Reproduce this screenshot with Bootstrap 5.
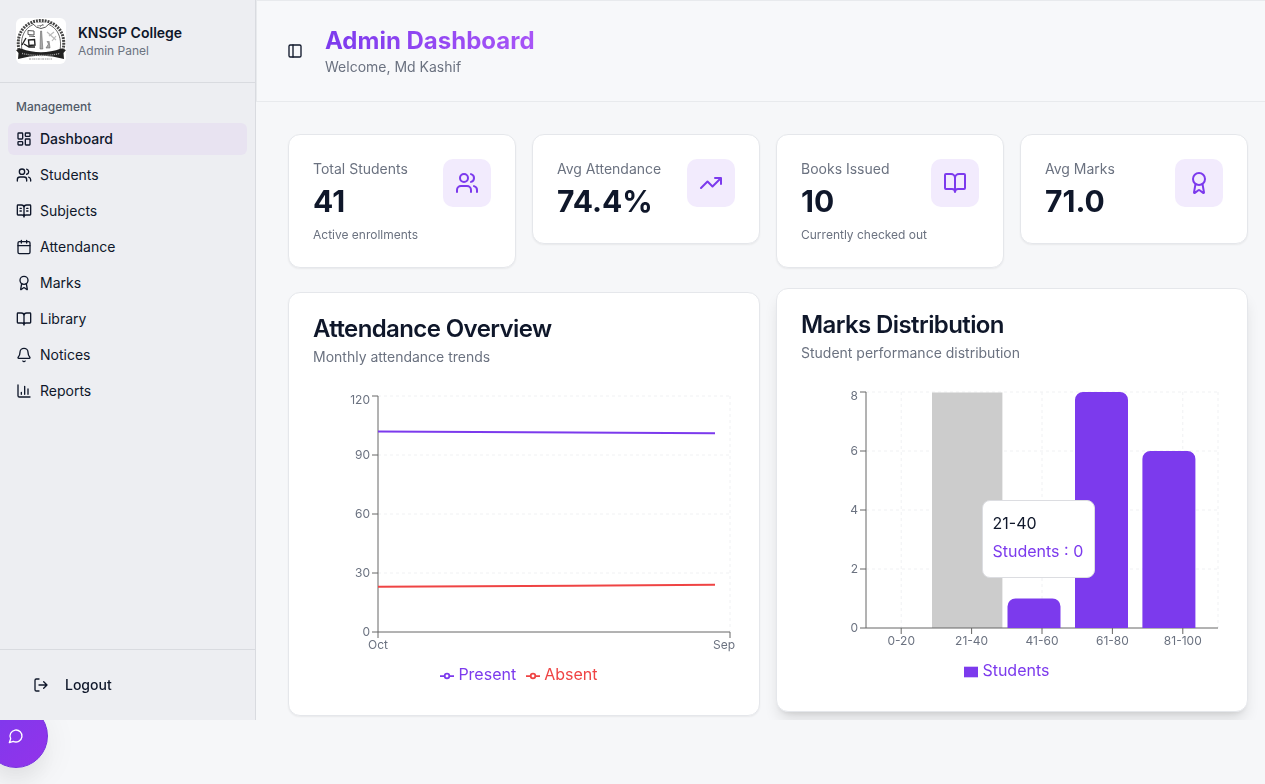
<!DOCTYPE html>
<html lang="en">
<head>
<meta charset="utf-8">
<meta name="viewport" content="width=device-width, initial-scale=1">
<title>Admin Dashboard</title>
<link href="https://cdn.jsdelivr.net/npm/bootstrap@5.3.0/dist/css/bootstrap.min.css" rel="stylesheet">
<style>
:root{--ink:#0f172a;--muted-ink:#6b7280;--brand:#7c3aed;--line:#e5e7eb}
html,body{height:100%}
body{font-family:Inter,sans-serif;font-size:14px;line-height:20px;color:var(--ink);background:#f6f7f9;overflow:hidden}
.ico{width:16px;height:16px;flex:none;fill:none;stroke:currentColor;stroke-width:2;stroke-linecap:round;stroke-linejoin:round}
.ico-lg{width:24px;height:24px}
.app-shell{height:720px;overflow:hidden;position:relative;z-index:2}
.side-panel{width:256px;flex:none;background:#edeef2;border-right:1px solid #d9dbe0}
.side-head{height:83px;padding:17px 16px 0;border-bottom:1px solid #d9dbe0;gap:12px}
.side-name{font-weight:600;line-height:17.5px;margin-top:7px}
.side-role{font-size:12px;line-height:16px;margin-top:1px}
.crest{width:50px;height:46px;margin-top:1px}
.group-title{font-size:12px;line-height:16px;font-weight:500;color:#515a68;padding:16px 8px 8px}
.side-nav{gap:4px}
.side-nav .nav-link{height:32px;padding:0 8px;gap:8px;border-radius:6px;color:var(--ink);font-weight:400}
.side-nav .nav-link.active{background:#e8e3f1;font-weight:500}
.side-foot{height:71px;border-top:1px solid #d9dbe0;padding:0 33px;font-weight:500;gap:16px}
.soft{color:var(--muted-ink)}
.main-head{height:102px;padding:0 30px;gap:22px;background:#f7f8fa;border:1px solid #e8eaed;border-right:0;will-change:transform}
.head-title{font-size:24px;line-height:32px;font-weight:700;margin:0;background:linear-gradient(90deg,#7c3aed,#a855f7);-webkit-background-clip:text;background-clip:text;color:transparent}
.main-body{padding:32px 17px 0 32px}
.tile{background:#fff;border:1px solid var(--line);border-radius:12px;padding:24px;box-shadow:0 1px 2px rgba(0,0,0,.06)}
.stat-row,.chart-row{display:grid;gap:16px}
.stat-row{grid-template-columns:repeat(4,1fr)}
.chart-row{grid-template-columns:repeat(2,1fr);margin-top:24px}
.stat-value{font-size:30px;line-height:36px;font-weight:700;margin-top:4px}
.stat-note{font-size:12px;line-height:16px;margin-top:8px}
.stat-tile{min-height:110px}
.stat-badge{width:48px;height:48px;border-radius:10px;background:#f2ebfd;color:var(--brand)}
.chart-title{font-size:24px;line-height:24px;font-weight:600;letter-spacing:-.6px;margin:0}
.chart-sub{margin-top:6px;margin-bottom:24px}
.chart-tile.lift{transform:translateY(-4px);box-shadow:0 10px 15px -3px rgba(0,0,0,.12),0 4px 6px -4px rgba(0,0,0,.12)}
.plot{position:relative;height:300px}
.plot svg.canvas{display:block;width:422px;height:300px}
.canvas text{font-size:12px;fill:var(--muted-ink)}
.canvas text.key{font-size:16px}
.axis{stroke:#666;stroke-width:1;fill:none}
.gridline{stroke:#f0f1f3;stroke-dasharray:3 3;fill:none;stroke-width:1}
.tip{position:absolute;left:181px;top:113px;width:112.500px;height:78px;background:#fff;border:1px solid #dcdde1;border-radius:8px;padding:10px 9.500px;font-size:16px;line-height:24px;white-space:nowrap;will-change:transform}
.tip p{margin:0}
.tip p+p{padding-top:4px;color:var(--brand)}
.fab{position:fixed;left:-16px;top:704px;width:64px;height:64px;border:1px solid #7432dc;border-radius:50%;background:linear-gradient(135deg,#7c3aed,#9333ea);color:#fff;box-shadow:0 20px 25px -5px rgba(0,0,0,.05),0 8px 34px rgba(0,0,0,.07);z-index:1}
</style>
</head>
<body>
<svg width="0" height="0" class="position-absolute" aria-hidden="true">
<symbol id="users" viewBox="0 0 24 24"><path d="M16 21v-2a4 4 0 0 0-4-4H6a4 4 0 0 0-4 4v2"/><circle cx="9" cy="7" r="4"/><path d="M22 21v-2a4 4 0 0 0-3-3.87M16 3.13a4 4 0 0 1 0 7.75"/></symbol>
<symbol id="book" viewBox="0 0 24 24"><path d="M12 7v14M3 18a1 1 0 0 1-1-1V4a1 1 0 0 1 1-1h5a4 4 0 0 1 4 4 4 4 0 0 1 4-4h5a1 1 0 0 1 1 1v13a1 1 0 0 1-1 1h-6a3 3 0 0 0-3 3 3 3 0 0 0-3-3z"/></symbol>
<symbol id="award" viewBox="0 0 24 24"><path d="m15.477 12.89 1.515 8.526a.5.5 0 0 1-.81.47l-3.58-2.687a1 1 0 0 0-1.197 0l-3.586 2.686a.5.5 0 0 1-.81-.469l1.514-8.526"/><circle cx="12" cy="8" r="6"/></symbol>
</svg>

<div class="app-shell d-flex">
  <aside class="side-panel d-flex flex-column">
    <div class="side-head d-flex align-items-start">
      <svg class="crest" viewBox="0 0 50 46">
        <rect width="50" height="46" rx="6" fill="#fff"/>
        <path d="M3 32C-1 14 11 2.500 25 2.500S51 14 47 32" fill="none" stroke="#444" stroke-width="3" stroke-dasharray="1.900 1"/>
        <path d="M6 32C3 15 13 5 25 5S47 15 44 32" fill="none" stroke="#444" stroke-width=".8"/>
        <path d="M16 5q9 11 18 0" fill="#fff" stroke="#444" stroke-width=".9"/><path d="M21 8l7-1M24 9l3-3" stroke="#777" stroke-width=".8"/>
        <path d="M24 31l.6-18h1l1.200 18z" fill="#aaa" stroke="#666" stroke-width=".6"/>
        <g fill="none" stroke="#555" stroke-width="1"><path d="M12 12.500l6 .5v4l-6-.5zM13 18l6 .5"/><path d="M12.500 22l6-.5.5 5.500-6 .5zM6 27l4-7M8 26l5 3h6" stroke="#222" stroke-width="1.400"/></g>
        <path d="M31 14l9 8M33 18l5-4M36 23l4-5" stroke="#bbb" stroke-width="1.200"/>
        <path d="M31 23l1.500 3-2.500 4h4l-1-7" fill="#aaa" stroke="#666" stroke-width=".6"/>
        <path d="M0 32l5-1.500q20 7.500 40 0l5 1.500-2.500 3 .5 6q-23-7-46 0l.5-6z" fill="#222"/>
        <path d="M6 35.500q19 4 38 0" fill="none" stroke="#aaa" stroke-width="1.300" stroke-dasharray="1 .9"/>
        <path d="M13 41h23" stroke="#888" stroke-width=".9" stroke-dasharray="2 .8 1 .6"/>
      </svg>
      <div><div class="side-name">KNSGP College</div><div class="side-role soft">Admin Panel</div></div>
    </div>
    <div class="px-2 flex-grow-1">
      <div class="group-title">Management</div>
      <nav class="side-nav nav flex-column">
        <a class="nav-link active d-flex align-items-center" href="#"><svg class="ico" viewBox="0 0 24 24"><rect width="7" height="9" x="3" y="3" rx="1"/><rect width="7" height="5" x="14" y="3" rx="1"/><rect width="7" height="9" x="14" y="12" rx="1"/><rect width="7" height="5" x="3" y="16" rx="1"/></svg>Dashboard</a>
        <a class="nav-link d-flex align-items-center" href="#"><svg class="ico"><use href="#users"/></svg>Students</a>
        <a class="nav-link d-flex align-items-center" href="#"><svg class="ico" viewBox="0 0 24 24"><use href="#book"/><path d="M6 8h2M6 12h2M16 8h2M16 12h2"/></svg>Subjects</a>
        <a class="nav-link d-flex align-items-center" href="#"><svg class="ico" viewBox="0 0 24 24"><path d="M8 2v4M16 2v4M3 10h18"/><rect width="18" height="18" x="3" y="4" rx="2"/></svg>Attendance</a>
        <a class="nav-link d-flex align-items-center" href="#"><svg class="ico"><use href="#award"/></svg>Marks</a>
        <a class="nav-link d-flex align-items-center" href="#"><svg class="ico"><use href="#book"/></svg>Library</a>
        <a class="nav-link d-flex align-items-center" href="#"><svg class="ico" viewBox="0 0 24 24"><path d="M10.268 21a2 2 0 0 0 3.464 0M3.262 15.326A1 1 0 0 0 4 17h16a1 1 0 0 0 .74-1.673C19.410 13.956 18 12.499 18 8A6 6 0 0 0 6 8c0 4.499-1.411 5.956-2.738 7.326"/></svg>Notices</a>
        <a class="nav-link d-flex align-items-center" href="#"><svg class="ico" viewBox="0 0 24 24"><path d="M3 3v16a2 2 0 0 0 2 2h16M18 17V9M13 17V5M8 17v-3"/></svg>Reports</a>
      </nav>
    </div>
    <div class="side-foot d-flex align-items-center"><svg class="ico" viewBox="0 0 24 24"><path d="m16 17 5-5-5-5M21 12H9M9 21H5a2 2 0 0 1-2-2V5a2 2 0 0 1 2-2h4"/></svg>Logout</div>
  </aside>

  <main class="flex-grow-1">
    <header class="main-head d-flex align-items-center">
      <svg class="ico" viewBox="0 0 24 24"><rect width="18" height="18" x="3" y="3" rx="2"/><path d="M9 3v18"/></svg>
      <div><h1 class="head-title">Admin Dashboard</h1><div class="soft">Welcome, Md Kashif</div></div>
    </header>
    <div class="main-body">
      <section class="stat-row align-items-start">
        <div class="tile stat-tile d-flex justify-content-between align-items-start">
          <div><div class="soft">Total Students</div><div class="stat-value">41</div><div class="stat-note soft">Active enrollments</div></div>
          <div class="stat-badge d-flex align-items-center justify-content-center"><svg class="ico ico-lg"><use href="#users"/></svg></div>
        </div>
        <div class="tile stat-tile d-flex justify-content-between align-items-start">
          <div><div class="soft">Avg Attendance</div><div class="stat-value">74.4%</div></div>
          <div class="stat-badge d-flex align-items-center justify-content-center"><svg class="ico ico-lg" viewBox="0 0 24 24"><path d="M16 7h6v6M22 7l-8.500 8.500-5-5L2 17"/></svg></div>
        </div>
        <div class="tile stat-tile d-flex justify-content-between align-items-start">
          <div><div class="soft">Books Issued</div><div class="stat-value">10</div><div class="stat-note soft">Currently checked out</div></div>
          <div class="stat-badge d-flex align-items-center justify-content-center"><svg class="ico ico-lg"><use href="#book"/></svg></div>
        </div>
        <div class="tile stat-tile d-flex justify-content-between align-items-start">
          <div><div class="soft">Avg Marks</div><div class="stat-value">71.0</div></div>
          <div class="stat-badge d-flex align-items-center justify-content-center"><svg class="ico ico-lg"><use href="#award"/></svg></div>
        </div>
      </section>

      <section class="chart-row">
        <div class="tile chart-tile">
          <h2 class="chart-title">Attendance Overview</h2>
          <div class="chart-sub soft">Monthly attendance trends</div>
          <div class="plot">
            <svg class="canvas" viewBox="0 0 422 300">
              <path class="gridline" d="M65 5H417M65 64H417M65 123H417M65 182H417M417 5V241"/>
              <path class="axis" d="M65 5V241M65 241H417M59 5H65M59 64H65M59 123H65M59 182H65M59 241H65M65 241V247M417 241V247"/>
              <g text-anchor="end"><text x="57" y="13">120</text><text x="57" y="68">90</text><text x="57" y="127">60</text><text x="57" y="186">30</text><text x="57" y="245">0</text></g>
              <g text-anchor="middle"><text x="65" y="258">Oct</text><text x="411" y="258">Sep</text></g>
              <path d="M65 40.400L402 42.300" stroke="#7c3aed" stroke-width="2"/>
              <path d="M65 195.800L402 193.800" stroke="#ef4444" stroke-width="2"/>
              <g fill="none" stroke-width="1.750"><path d="M127 285h4.700M136.300 285h4.700" stroke="#7c3aed"/><circle cx="134" cy="285" r="2.300" stroke="#7c3aed"/><path d="M213 285h4.700M222.300 285h4.700" stroke="#ef4444"/><circle cx="220" cy="285" r="2.300" stroke="#ef4444"/></g>
              <text class="key" x="145.400" y="289" style="fill:#7c3aed">Present</text><text class="key" x="231.200" y="289" style="fill:#ef4444">Absent</text>
            </svg>
          </div>
        </div>
        <div class="tile chart-tile lift">
          <h2 class="chart-title">Marks Distribution</h2>
          <div class="chart-sub soft">Student performance distribution</div>
          <div class="plot">
            <svg class="canvas" viewBox="0 0 422 300">
              <path class="gridline" d="M65 5H417M65 64H417M65 123H417M65 182H417M100.200 5V241M241 5V241M311.400 5V241M381.800 5V241M417 5V241"/>
              <rect x="131" y="5.500" width="70.400" height="235.500" fill="#ccc"/>
              <path class="axis" d="M65 5V241M65 241H417M59 5H65M59 64H65M59 123H65M59 182H65M59 241H65M100.200 241V247M170.600 241V247M241 241V247M311.400 241V247M381.800 241V247"/>
              <g fill="#7c3aed"><path d="M206.500 241V219.500a8 8 0 0 1 8-8h37a8 8 0 0 1 8 8V241zM274 241V13a8 8 0 0 1 8-8h37a8 8 0 0 1 8 8V241zM341.400 241V72a8 8 0 0 1 8-8h37a8 8 0 0 1 8 8V241z"/><rect x="163" y="279.700" width="14" height="10.600"/></g>
              <g text-anchor="end"><text x="57" y="13">8</text><text x="57" y="68">6</text><text x="57" y="127">4</text><text x="57" y="186">2</text><text x="57" y="245">0</text></g>
              <g text-anchor="middle"><text x="100.200" y="258">0-20</text><text x="170.600" y="258">21-40</text><text x="241" y="258">41-60</text><text x="311.400" y="258">61-80</text><text x="381.800" y="258">81-100</text></g>
              <text class="key" x="181.400" y="289" style="fill:#7c3aed">Students</text>
            </svg>
            <div class="tip"><p>21-40</p><p>Students : 0</p></div>
          </div>
        </div>
      </section>
    </div>
  </main>
</div>

<button class="fab d-flex align-items-center justify-content-center p-0" aria-label="Open chat"><svg class="ico" viewBox="0 0 24 24"><path d="M7.900 20A9 9 0 1 0 4 16.100L2 22Z"/></svg></button>
<script src="https://cdn.jsdelivr.net/npm/bootstrap@5.3.0/dist/js/bootstrap.bundle.min.js"></script>
</body>
</html>
